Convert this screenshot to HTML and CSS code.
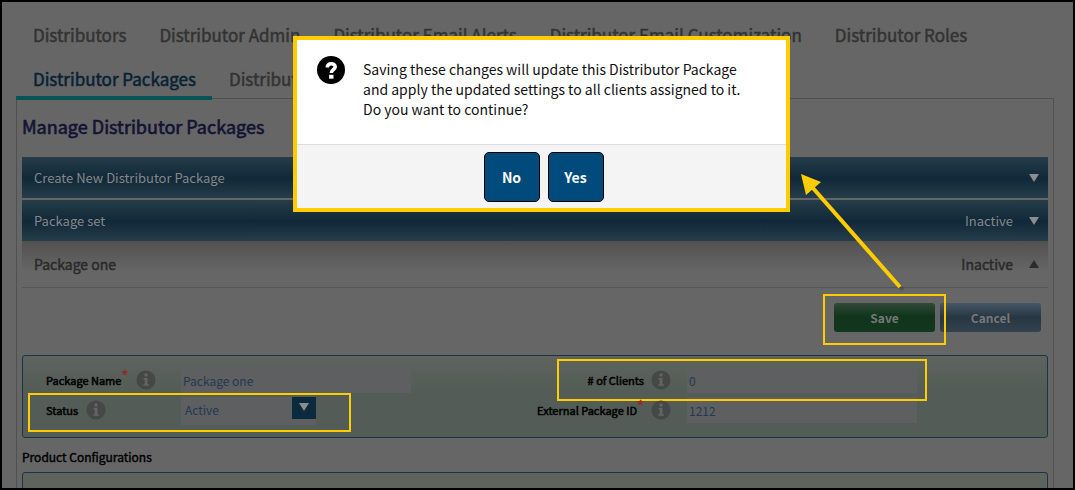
FILE: index.html
```html
<!DOCTYPE html>
<html lang="en">
<head>
<meta charset="utf-8">
<title>Manage Distributor Packages</title>
<link rel="stylesheet" href="styles.css">
</head>
<body>
<svg class="sprite" width="0" height="0" aria-hidden="true">
  <symbol id="info" viewBox="0 0 20 20">
    <circle cx="10" cy="10" r="9.5" fill="#454846"/>
    <circle cx="10" cy="5" r="1.7" fill="#626563"/>
    <path d="M7.500 8h4v6.200h1.400v1.600H7.300v-1.600h1.400V9.600H7.500z" fill="#626563"/>
  </symbol>
</svg>
<div class="screen">
  <nav class="tabs">
    <div class="tab-row">
      <a class="tab" href="#">Distributors</a>
      <a class="tab" href="#">Distributor Admin</a>
      <a class="tab" href="#">Distributor Email Alerts</a>
      <a class="tab" href="#">Distributor Email Customization</a>
      <a class="tab" href="#">Distributor Roles</a>
    </div>
    <div class="tab-row last">
      <a class="tab active" href="#">Distributor Packages</a>
      <a class="tab" href="#">Distributor</a>
    </div>
  </nav>
  <main class="content">
    <h1>Manage Distributor Packages</h1>
    <div class="accordion">
      <button class="bar" type="button"><span class="name">Create New Distributor Package</span><span class="tri down"></span></button>
      <button class="bar" type="button"><span class="name">Package set</span><span>Inactive</span><span class="tri down"></span></button>
      <button class="bar open" type="button"><span class="name">Package one</span><span>Inactive</span><span class="tri up"></span></button>
    </div>
    <div class="actions">
      <div class="save-mark"><button class="btn save" type="button">Save</button></div>
      <button class="btn cancel" type="button">Cancel</button>
    </div>
    <form class="card details">
      <div class="label"><label for="name">Package Name<span class="req">*</span></label><svg class="info"><use href="#info"/></svg></div>
      <input id="name" type="text" value="Package one">
      <div class="label right clients-mark"><label for="clients"># of Clients</label><svg class="info"><use href="#info"/></svg></div>
      <input id="clients" type="text" value="0">
      <div class="label status-mark"><label for="status">Status</label><svg class="info"><use href="#info"/></svg></div>
      <div class="picker">
        <select id="status"><option>Active</option><option>Inactive</option></select>
        <span class="picker-arrow"><span class="tri down"></span></span>
      </div>
      <div class="label right"><label for="ext">External Package ID<span class="req">*</span></label><svg class="info"><use href="#info"/></svg></div>
      <input id="ext" type="text" value="1212">
    </form>
    <h2>Product Configurations</h2>
    <div class="card products"></div>
  </main>

  <svg class="arrow" viewBox="0 0 110 125" aria-hidden="true">
    <path d="M16 18 103 117" stroke="#444" stroke-opacity=".5" stroke-width="4"/>
    <path d="M12 14 100 114" stroke="#fc0" stroke-width="4"/>
    <path d="M1 1 21 9 6 22z" fill="#fc0"/>
  </svg>

  <div class="dialog" role="dialog" aria-labelledby="message">
    <div class="dialog-body">
      <svg class="question" viewBox="0 0 28 28" aria-hidden="true">
        <circle cx="14" cy="14" r="14" fill="#000"/>
        <path d="M10.300 11.500C10.300 6.600 18.200 6.800 18.200 10.800 18.200 13.600 14.300 13.400 14.300 17" fill="none" stroke="#fff" stroke-width="3.600"/>
        <path d="M12.100 18.800h4.400v3.900h-4.400z" fill="#fff"/>
      </svg>
      <p id="message">Saving these changes will update this Distributor Package<br>and apply the updated settings to all clients assigned to it.<br>Do you want to continue?</p>
    </div>
    <div class="dialog-foot">
      <button type="button">No</button>
      <button type="button">Yes</button>
    </div>
  </div>
</div>
</body>
</html>
```
FILE: styles.css
```css
*, *::before, *::after { box-sizing: border-box; }
body {
  margin: 0;
  background: #666;
  color: #2f2f2f;
  font-family: "Noto Sans CJK SC", "Noto Sans", sans-serif;
  font-size: 14px;
  line-height: 20px;
}
button, input, select { font: inherit; color: inherit; }
.sprite { position: absolute; }
.screen {
  position: relative;
  height: 100vh;
  overflow: hidden;
  padding: 11px 19px 0 14px;
  border: 2px solid #000;
}
.tab-row { display: flex; height: 44px; }
.tab {
  padding: 10px 16px 0 17px;
  color: #333;
  font-size: 17px;
  line-height: 24px;
  white-space: nowrap;
  text-decoration: none;
  -webkit-text-stroke: 0.5px;
}
.last { position: relative; height: 43px; margin-bottom: -2px; }
.active { border-bottom: 4px solid #065358; color: #062234; }
.content {
  height: 500px;
  padding: 0 5px;
  border: 1px solid #505050;
}
h1 {
  margin: 0;
  padding: 15px 0 18px;
  color: #131333;
  font-size: 18px;
  font-weight: 400;
  line-height: 25px;
  -webkit-text-stroke: 0.6px;
}
.bar {
  display: flex;
  align-items: center;
  gap: 16px;
  width: 100%;
  height: 41px;
  margin-bottom: 2px;
  padding: 0 9px 0 12px;
  border: 0;
  background: linear-gradient(#263c49, #102838 52%, #263d4a);
  color: #858788;
  font-size: 13px;
  text-align: left;
}
.name { flex: 1; }
.bar.open {
  height: 47px;
  margin-top: -2px;
  margin-bottom: 0;
  border-bottom: 1px solid #555;
  background: linear-gradient(#535050, #666 65%);
  color: #2b2b2b;
  font-size: 14px;
  -webkit-text-stroke: 0.5px;
}
.tri { border: 5px solid transparent; }
.down { border-top: 8px solid #8b8d8e; border-bottom: 0; }
.up { border-bottom: 8px solid #2b2b2b; border-top: 0; }
.actions {
  display: flex;
  justify-content: flex-end;
  gap: 5px;
  padding: 15px 7px 23px;
}
.save-mark { position: relative; }
.save-mark::after, .clients-mark::after, .status-mark::after {
  content: "";
  position: absolute;
  border: 2px solid #fc0;
  pointer-events: none;
}
.save-mark::after { inset: -9px -11px -13px; }
.btn {
  width: 101px;
  height: 29px;
  padding: 0;
  border: 0;
  border-radius: 3px;
  color: #777;
  font-size: 12px;
  font-weight: 700;
  line-height: 28px;
}
.save { background: linear-gradient(#324837, #10351c 45%, #12371e); }
.cancel { background: linear-gradient(#465665, #263642 50%, #32424f); }
.card {
  border: 1px solid #1a3545;
  border-radius: 3px;
  background: linear-gradient(#5e635e, #535c56 45%);
}
.details {
  display: grid;
  grid-template-columns: 135px 230px 1fr 230px;
  row-gap: 4px;
  padding: 11px 130px 12px 23px;
}
.label {
  position: relative;
  display: flex;
  align-items: center;
  gap: 8px;
  height: 26px;
  color: #000;
  font-size: 11px;
  -webkit-text-stroke: 0.5px;
}
.right { justify-content: flex-end; padding-right: 16px; gap: 7px; }
.req {
  color: #912a2a;
  font-size: 15px;
  line-height: 12px;
  vertical-align: 3px;
}
.info { width: 20px; height: 20px; }
.clients-mark::after { top: -8px; right: -240px; width: 370px; height: 42px; }
.status-mark::after { top: -4px; left: -18px; width: 323px; height: 39px; }
input, select {
  min-width: 0;
  height: 26px;
  padding: 0 2px;
  border: 0;
  border-radius: 0;
  background: #5e5f61;
  color: #24394f;
  font-size: 12px;
}
.picker { display: flex; width: 135px; height: 28px; background: #5e5f61; }
select { flex: 1; padding-left: 4px; appearance: none; background: none; }
.picker-arrow {
  display: flex;
  justify-content: center;
  width: 24px;
  height: 22px;
  padding-top: 6px;
  background: #0b2a3e;
}
.picker-arrow .tri { height: 8px; }
h2 {
  margin: 0;
  padding: 9px 0 5px;
  color: #000;
  font-size: 12px;
  font-weight: 400;
  line-height: 20px;
  -webkit-text-stroke: 0.4px;
}
.products { height: 60px; background: #5e635e; }
.arrow {
  position: absolute;
  top: 171px;
  left: 798px;
  width: 110px;
  height: 125px;
}
.dialog {
  position: absolute;
  top: 34px;
  left: 291px;
  width: 497px;
  border: 4px solid #fc0;
  background: #fff;
  color: #111;
}
.dialog-body {
  display: flex;
  align-items: flex-start;
  gap: 18px;
  min-height: 105px;
  padding: 16px 20px 0;
  border-bottom: 1px solid #ddd;
}
.question { width: 28px; height: 28px; }
.dialog p { flex: 1; margin: 3px 0 0; white-space: nowrap; }
.dialog-foot {
  display: flex;
  justify-content: center;
  gap: 8px;
  padding: 7px 0 6px 4px;
  background: #f4f4f4;
}
.dialog-foot button {
  min-width: 56px;
  height: 50px;
  border: 1px solid #000;
  border-radius: 5px;
  background: #004b7c;
  color: #fff;
  font-weight: 700;
}
```
